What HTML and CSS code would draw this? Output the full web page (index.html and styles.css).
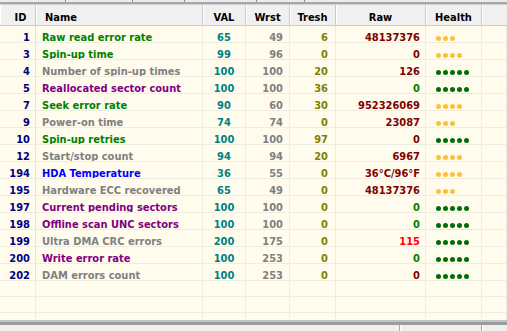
FILE: index.html
```html
<!DOCTYPE html>
<html lang="en">
<head>
    <meta charset="UTF-8">
    <title>SMART attributes</title>
    <link rel="stylesheet" href="styles.css">
</head>
<body>
    <div class="top-edge">
        <span class="tab" style="width: 66px"></span>
        <span class="tab" style="width: 67px"></span>
        <span class="tab" style="width: 52px"></span>
        <span class="tab" style="width: 72px"></span>
        <span class="tab" style="width: 48px"></span>
    </div>
    <div class="splitter"></div>

    <div class="list">
        <table class="smart">
            <colgroup>
                <col class="w-id">
                <col class="w-name">
                <col class="w-val">
                <col class="w-wrst">
                <col class="w-tresh">
                <col class="w-raw">
                <col class="w-health">
                <col class="w-rest">
            </colgroup>
            <thead>
                <tr>
                    <th class="id">ID</th>
                    <th class="name">Name</th>
                    <th>VAL</th>
                    <th>Wrst</th>
                    <th>Tresh</th>
                    <th>Raw</th>
                    <th>Health</th>
                    <th></th>
                </tr>
            </thead>
            <tbody>
                <tr><td class="id">1</td><td class="name green">Raw read error rate</td><td class="val">65</td><td class="wrst">49</td><td class="tresh">6</td><td class="raw">48137376</td><td class="health"><i class="dot o"></i><i class="dot o"></i><i class="dot o"></i></td><td></td></tr>
                <tr><td class="id">3</td><td class="name green">Spin-up time</td><td class="val">99</td><td class="wrst">96</td><td class="tresh">0</td><td class="raw">0</td><td class="health"><i class="dot o"></i><i class="dot o"></i><i class="dot o"></i><i class="dot o"></i></td><td></td></tr>
                <tr><td class="id">4</td><td class="name gray">Number of spin-up times</td><td class="val">100</td><td class="wrst">100</td><td class="tresh">20</td><td class="raw">126</td><td class="health"><i class="dot g"></i><i class="dot g"></i><i class="dot g"></i><i class="dot g"></i><i class="dot g"></i></td><td></td></tr>
                <tr><td class="id">5</td><td class="name purple">Reallocated sector count</td><td class="val">100</td><td class="wrst">100</td><td class="tresh">36</td><td class="raw ok">0</td><td class="health"><i class="dot g"></i><i class="dot g"></i><i class="dot g"></i><i class="dot g"></i><i class="dot g"></i></td><td></td></tr>
                <tr><td class="id">7</td><td class="name green">Seek error rate</td><td class="val">90</td><td class="wrst">60</td><td class="tresh">30</td><td class="raw">952326069</td><td class="health"><i class="dot o"></i><i class="dot o"></i><i class="dot o"></i><i class="dot o"></i></td><td></td></tr>
                <tr><td class="id">9</td><td class="name gray">Power-on time</td><td class="val">74</td><td class="wrst">74</td><td class="tresh">0</td><td class="raw">23087</td><td class="health"><i class="dot o"></i><i class="dot o"></i><i class="dot o"></i></td><td></td></tr>
                <tr><td class="id">10</td><td class="name green">Spin-up retries</td><td class="val">100</td><td class="wrst">100</td><td class="tresh">97</td><td class="raw">0</td><td class="health"><i class="dot g"></i><i class="dot g"></i><i class="dot g"></i><i class="dot g"></i><i class="dot g"></i></td><td></td></tr>
                <tr><td class="id">12</td><td class="name gray">Start/stop count</td><td class="val">94</td><td class="wrst">94</td><td class="tresh">20</td><td class="raw">6967</td><td class="health"><i class="dot o"></i><i class="dot o"></i><i class="dot o"></i><i class="dot o"></i></td><td></td></tr>
                <tr><td class="id">194</td><td class="name blue">HDA Temperature</td><td class="val">36</td><td class="wrst">55</td><td class="tresh">0</td><td class="raw blue">36°C/96°F</td><td class="health"><i class="dot o"></i><i class="dot o"></i><i class="dot o"></i><i class="dot o"></i></td><td></td></tr>
                <tr><td class="id">195</td><td class="name gray">Hardware ECC recovered</td><td class="val">65</td><td class="wrst">49</td><td class="tresh">0</td><td class="raw">48137376</td><td class="health"><i class="dot o"></i><i class="dot o"></i><i class="dot o"></i></td><td></td></tr>
                <tr><td class="id">197</td><td class="name purple">Current pending sectors</td><td class="val">100</td><td class="wrst">100</td><td class="tresh">0</td><td class="raw ok">0</td><td class="health"><i class="dot g"></i><i class="dot g"></i><i class="dot g"></i><i class="dot g"></i><i class="dot g"></i></td><td></td></tr>
                <tr><td class="id">198</td><td class="name purple">Offline scan UNC sectors</td><td class="val">100</td><td class="wrst">100</td><td class="tresh">0</td><td class="raw ok">0</td><td class="health"><i class="dot g"></i><i class="dot g"></i><i class="dot g"></i><i class="dot g"></i><i class="dot g"></i></td><td></td></tr>
                <tr><td class="id">199</td><td class="name gray">Ultra DMA CRC errors</td><td class="val">200</td><td class="wrst">175</td><td class="tresh">0</td><td class="raw bad">115</td><td class="health"><i class="dot g"></i><i class="dot g"></i><i class="dot g"></i><i class="dot g"></i><i class="dot g"></i></td><td></td></tr>
                <tr><td class="id">200</td><td class="name purple">Write error rate</td><td class="val">100</td><td class="wrst">253</td><td class="tresh">0</td><td class="raw ok">0</td><td class="health"><i class="dot g"></i><i class="dot g"></i><i class="dot g"></i><i class="dot g"></i><i class="dot g"></i></td><td></td></tr>
                <tr><td class="id">202</td><td class="name gray">DAM errors count</td><td class="val">100</td><td class="wrst">253</td><td class="tresh">0</td><td class="raw">0</td><td class="health"><i class="dot g"></i><i class="dot g"></i><i class="dot g"></i><i class="dot g"></i><i class="dot g"></i></td><td></td></tr>
                <tr><td></td><td></td><td></td><td></td><td></td><td></td><td></td><td></td></tr>
                <tr><td></td><td></td><td></td><td></td><td></td><td></td><td></td><td></td></tr>
                <tr><td></td><td></td><td></td><td></td><td></td><td></td><td></td><td></td></tr>
            </tbody>
        </table>
    </div>

    <div class="splitter bottom"></div>
    <div class="status">
        <span class="panel wide"></span>
        <span class="panel"></span>
        <span class="panel rest"></span>
    </div>
</body>
</html>
```

FILE: styles.css
```css
body {
    margin: 0;
    background-color: #f0f0f0;
    font-family: 'DejaVu Sans Condensed', 'DejaVu Sans', Tahoma, sans-serif;
    font-size: 11px;
    font-weight: bold;
    overflow: hidden;
}
.top-edge {
    height: 2px;
    display: flex;
    background-color: #ececec;
}
.tab {
    height: 2px;
    border-right: 1px solid #8c8c8c;
    box-sizing: border-box;
}
.splitter {
    height: 2px;
    background-color: #a6a6a6;
    border-bottom: 1px solid #d2d2d2;
}
.splitter.bottom {
    height: 2px;
    background-color: #c2c2c2;
    border-bottom: 3px solid #9c9c9c;
}
.list {
    height: 315px;
    overflow: hidden;
    background-color: #fffcee;
}
.smart {
    table-layout: fixed;
    width: 507px;
    border-collapse: separate;
    border-spacing: 0;
}
.w-id { width: 36px; }
.w-name { width: 167px; }
.w-val { width: 43px; }
.w-wrst { width: 44px; }
.w-tresh { width: 46px; }
.w-raw { width: 90px; }
.w-health { width: 56px; }
.w-rest { width: 25px; }
.smart th {
    background-color: #f0f0f0;
    color: #000;
    padding: 5px 0 0 0;
    line-height: 15px;
    text-align: center;
    border-right: 1px solid #cbcbcb;
    border-bottom: 1px solid #c9c9c9;
    box-shadow: inset 1px 0 #fff;
    white-space: nowrap;
    overflow: hidden;
}
.smart th:last-child {
    border-right: none;
}
.smart th.name {
    text-align: left;
    padding-left: 9px;
}
.smart th.id {
    padding-left: 6px;
}
.smart td {
    height: 16px;
    box-sizing: border-box;
    padding: 7px 0 0 0;
    line-height: 9px;
    border-right: 1px solid #efece2;
    border-bottom: 1px solid #efece2;
    white-space: nowrap;
    overflow: hidden;
}
.smart td.id {
    text-align: right;
    padding-right: 5px;
    color: #000080;
    border-right-color: #e6e5e0;
}
.smart td.name {
    padding-left: 6px;
}
.smart td.val {
    text-align: center;
    color: #008080;
}
.smart td.wrst {
    text-align: right;
    padding-right: 6px;
    color: #808080;
}
.smart td.tresh {
    text-align: right;
    padding-right: 7px;
    color: #808000;
}
.smart td.raw {
    text-align: right;
    padding-right: 5px;
    color: #800000;
}
.smart td.health {
    padding-left: 10px;
}
.green { color: #008000; }
.gray { color: #808080; }
.purple { color: #800080; }
.smart .blue { color: #0000ff; }
.smart td.ok { color: #008000; }
.smart td.bad { color: #ff0000; }
.dot {
    display: inline-block;
    width: 5px;
    height: 5px;
    border-radius: 50%;
    margin-right: 2px;
    vertical-align: middle;
}
.dot.o { background-color: #fcc13a; }
.dot.g { background-color: #006e08; }
.status {
    display: flex;
    height: 6px;
    background-color: #f0f0f0;
}
.panel {
    flex: 0 0 81px;
    border-left: 1px solid #a8a8a8;
    box-shadow: inset 1px 0 #fff;
}
.panel.wide {
    flex: 0 0 399px;
    border-left: none;
    box-shadow: none;
}
.panel.rest {
    flex: 1 1 auto;
}
```
